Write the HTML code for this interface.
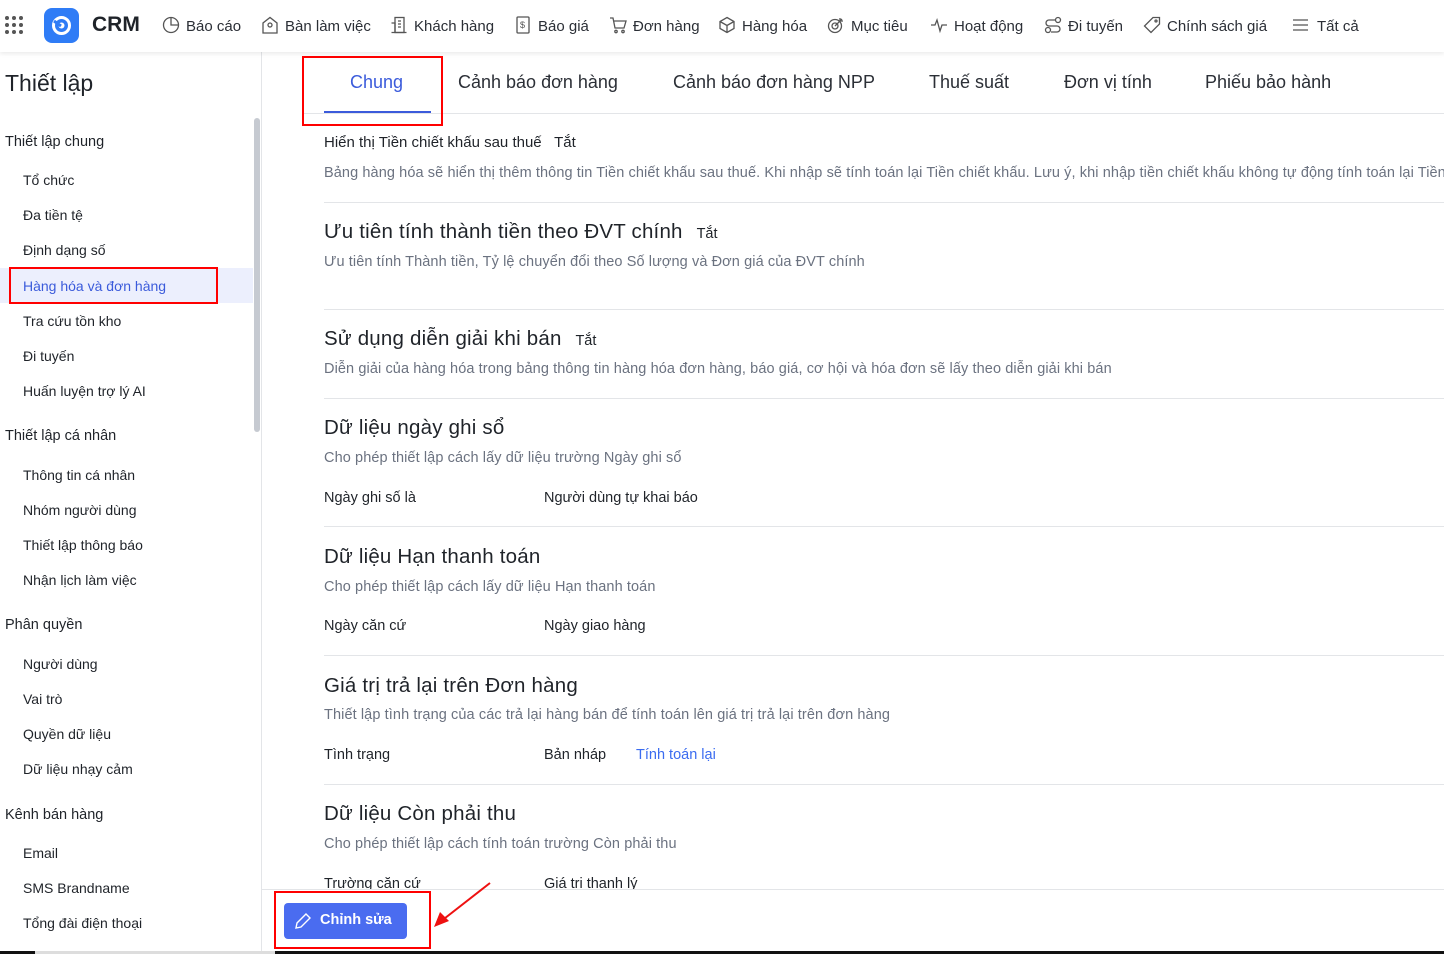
<!DOCTYPE html>
<html><head><meta charset="utf-8"><style>
*{margin:0;padding:0;box-sizing:border-box}
body{width:1444px;height:954px;overflow:hidden;background:#fff;font-family:"Liberation Sans",sans-serif;color:#1f2329;position:relative}
.a{position:absolute;white-space:nowrap}
.top{position:absolute;left:0;top:0;width:1444px;height:52px;background:#fff;box-shadow:0 2px 4px rgba(0,0,0,.08);z-index:2}
.nav{font-size:15px;color:#2b2f36;top:16px}
.nav svg{vertical-align:-3px;margin-right:6px}
.side{font-size:14px;color:#1f2329}
.grp{font-size:14.5px;color:#1f2329}
.h{font-size:20.5px;color:#1f2329;letter-spacing:.2px}
.d{font-size:14.5px;color:#6b7280;letter-spacing:.1px}
.sep{position:absolute;left:324px;right:0;height:1px;background:#e3e5e8}
.lab{font-size:14.5px;color:#1f2329}
.tab{font-size:18px;color:#2b2f36;top:72px}
</style></head><body>
<div class="top">
<svg class="a" style="left:4px;top:15px" width="20" height="20"><g fill="#555">
<circle cx="3" cy="3" r="2"/><circle cx="10" cy="3" r="2"/><circle cx="17" cy="3" r="2"/>
<circle cx="3" cy="10" r="2"/><circle cx="10" cy="10" r="2"/><circle cx="17" cy="10" r="2"/>
<circle cx="3" cy="17" r="2"/><circle cx="10" cy="17" r="2"/><circle cx="17" cy="17" r="2"/></g></svg>
<div class="a" style="left:44px;top:8px;width:35px;height:35px;border-radius:8px;background:#2f7cf6"></div>
<svg class="a" style="left:49px;top:13px" width="25" height="25"><circle cx="12.5" cy="12.5" r="8" fill="none" stroke="#fff" stroke-width="3"/><circle cx="12.5" cy="12.5" r="3" fill="#fff"/><path d="M5 8 L12 13" stroke="#2f7cf6" stroke-width="3"/></svg>
<div class="a" style="left:92px;top:13px;font-size:21px;font-weight:bold;color:#1f2329">CRM</div>
<div class="a nav" style="left:162px"><svg width="18" height="18" fill="none" stroke="#555" stroke-width="1.3"><circle cx="9" cy="9" r="7.5"/><path d="M9 1.5V9H16.5"/></svg>Báo cáo</div>
<div class="a nav" style="left:261px"><svg width="18" height="18" fill="none" stroke="#555" stroke-width="1.3"><path d="M2 17V7L9 1.5 16 7v10z"/><circle cx="9" cy="9" r="2"/></svg>Bàn làm việc</div>
<div class="a nav" style="left:390px"><svg width="18" height="18" fill="none" stroke="#555" stroke-width="1.3"><rect x="5" y="1.5" width="9" height="15"/><path d="M1.5 16.5h15M1.5 7h3.5v9.5"/><path d="M8 5h3M8 8h3M8 11h3"/></svg>Khách hàng</div>
<div class="a nav" style="left:514px"><svg width="18" height="18" fill="none" stroke="#555" stroke-width="1.3"><rect x="3" y="1" width="12" height="16" rx="1"/><text x="6" y="12" font-size="9" fill="#555" stroke="none">$</text></svg>Báo giá</div>
<div class="a nav" style="left:609px"><svg width="18" height="18" fill="none" stroke="#555" stroke-width="1.3"><path d="M1 2h3l2 10h9l2-7H5"/><circle cx="7" cy="15.5" r="1.2"/><circle cx="14" cy="15.5" r="1.2"/></svg>Đơn hàng</div>
<div class="a nav" style="left:718px"><svg width="18" height="18" fill="none" stroke="#555" stroke-width="1.3"><path d="M9 1.5l7 4v7l-7 4-7-4v-7z M2 5.5l7 4 7-4 M9 9.5v7"/></svg>Hàng hóa</div>
<div class="a nav" style="left:827px"><svg width="18" height="18" fill="none" stroke="#555" stroke-width="1.3"><circle cx="8" cy="10" r="6.5"/><circle cx="8" cy="10" r="3"/><path d="M8 10l7-7M13 2v3h3"/></svg>Mục tiêu</div>
<div class="a nav" style="left:930px"><svg width="18" height="18" fill="none" stroke="#555" stroke-width="1.3"><path d="M1 9h4l2-5 3 11 2-6h5"/></svg>Hoạt động</div>
<div class="a nav" style="left:1044px"><svg width="18" height="18" fill="none" stroke="#555" stroke-width="1.3"><circle cx="14" cy="4" r="2.5"/><circle cx="4" cy="14" r="2.5"/><path d="M11 4H5a3 3 0 000 6h8a3 3 0 010 6H7"/></svg>Đi tuyến</div>
<div class="a nav" style="left:1143px"><svg width="18" height="18" fill="none" stroke="#555" stroke-width="1.3"><path d="M10 1.5h6.5V8l-8.5 8.5-6.5-6.5z"/><circle cx="13" cy="5" r="1"/></svg>Chính sách giá</div>
<div class="a nav" style="left:1291px"><svg width="20" height="18" fill="none" stroke="#555" stroke-width="1.3"><path d="M2 4h15M2 9h15M2 14h15"/></svg>Tất cả</div>
</div>

<div class="a" style="left:261px;top:52px;width:1px;height:902px;background:#e3e5e8"></div>
<div class="a" style="left:254px;top:118px;width:6px;height:314px;border-radius:3px;background:#c6cad1"></div>
<div class="a" style="left:5px;top:70px;font-size:23px;color:#1f2329">Thiết lập</div>
<div class="a grp" style="left:5px;top:134px">Thiết lập chung</div>
<div class="a side" style="left:23px;top:172px">Tổ chức</div>
<div class="a side" style="left:23px;top:207px">Đa tiền tệ</div>
<div class="a side" style="left:23px;top:242px">Định dạng số</div>
<div class="a" style="left:0;top:268px;width:253px;height:35px;background:#eceffd"></div>
<div class="a side" style="left:23px;top:278px;color:#3b5bdb">Hàng hóa và đơn hàng</div>
<div class="a" style="left:9px;top:267px;width:209px;height:37px;border:2px solid #f00"></div>
<div class="a side" style="left:23px;top:313px">Tra cứu tồn kho</div>
<div class="a side" style="left:23px;top:348px">Đi tuyến</div>
<div class="a side" style="left:23px;top:383px">Huấn luyện trợ lý AI</div>
<div class="a grp" style="left:5px;top:428px">Thiết lập cá nhân</div>
<div class="a side" style="left:23px;top:467px">Thông tin cá nhân</div>
<div class="a side" style="left:23px;top:502px">Nhóm người dùng</div>
<div class="a side" style="left:23px;top:537px">Thiết lập thông báo</div>
<div class="a side" style="left:23px;top:572px">Nhận lịch làm việc</div>
<div class="a grp" style="left:5px;top:617px">Phân quyền</div>
<div class="a side" style="left:23px;top:656px">Người dùng</div>
<div class="a side" style="left:23px;top:691px">Vai trò</div>
<div class="a side" style="left:23px;top:726px">Quyền dữ liệu</div>
<div class="a side" style="left:23px;top:761px">Dữ liệu nhạy cảm</div>
<div class="a grp" style="left:5px;top:807px">Kênh bán hàng</div>
<div class="a side" style="left:23px;top:845px">Email</div>
<div class="a side" style="left:23px;top:880px">SMS Brandname</div>
<div class="a side" style="left:23px;top:915px">Tổng đài điện thoại</div>

<div class="a" style="left:304px;top:113px;width:1140px;height:1px;background:#e3e5e8"></div>
<div class="a tab" style="left:350px;color:#3b5bdb">Chung</div>
<div class="a" style="left:324px;top:111px;width:107px;height:2px;background:#3b5bdb"></div>
<div class="a" style="left:302px;top:56px;width:141px;height:70px;border:2px solid #f00"></div>
<div class="a tab" style="left:458px">Cảnh báo đơn hàng</div>
<div class="a tab" style="left:673px">Cảnh báo đơn hàng NPP</div>
<div class="a tab" style="left:929px">Thuế suất</div>
<div class="a tab" style="left:1064px">Đơn vị tính</div>
<div class="a tab" style="left:1205px">Phiếu bảo hành</div>

<div class="a lab" style="left:324px;top:134px;font-size:15px">Hiển thị Tiền chiết khấu sau thuế &nbsp;&nbsp;Tắt</div>
<div class="a d" style="left:324px;top:165px">Bảng hàng hóa sẽ hiển thị thêm thông tin Tiền chiết khấu sau thuế. Khi nhập sẽ tính toán lại Tiền chiết khấu. Lưu ý, khi nhập tiền chiết khấu không tự động tính toán lại Tiền</div>
<div class="sep" style="top:202px"></div>
<div class="a h" style="left:324px;top:220px">Ưu tiên tính thành tiền theo ĐVT chính <span style="font-size:14.5px;margin-left:8px;letter-spacing:0">Tắt</span></div>
<div class="a d" style="left:324px;top:254px">Ưu tiên tính Thành tiền, Tỷ lệ chuyển đổi theo Số lượng và Đơn giá của ĐVT chính</div>
<div class="sep" style="top:309px"></div>
<div class="a h" style="left:324px;top:327px">Sử dụng diễn giải khi bán <span style="font-size:14.5px;margin-left:8px;letter-spacing:0">Tắt</span></div>
<div class="a d" style="left:324px;top:361px">Diễn giải của hàng hóa trong bảng thông tin hàng hóa đơn hàng, báo giá, cơ hội và hóa đơn sẽ lấy theo diễn giải khi bán</div>
<div class="sep" style="top:398px"></div>
<div class="a h" style="left:324px;top:416px">Dữ liệu ngày ghi sổ</div>
<div class="a d" style="left:324px;top:450px">Cho phép thiết lập cách lấy dữ liệu trường Ngày ghi sổ</div>
<div class="a lab" style="left:324px;top:490px">Ngày ghi số là</div>
<div class="a lab" style="left:544px;top:490px">Người dùng tự khai báo</div>
<div class="sep" style="top:526px"></div>
<div class="a h" style="left:324px;top:545px">Dữ liệu Hạn thanh toán</div>
<div class="a d" style="left:324px;top:579px">Cho phép thiết lập cách lấy dữ liệu Hạn thanh toán</div>
<div class="a lab" style="left:324px;top:618px">Ngày căn cứ</div>
<div class="a lab" style="left:544px;top:618px">Ngày giao hàng</div>
<div class="sep" style="top:655px"></div>
<div class="a h" style="left:324px;top:674px">Giá trị trả lại trên Đơn hàng</div>
<div class="a d" style="left:324px;top:707px">Thiết lập tình trạng của các trả lại hàng bán để tính toán lên giá trị trả lại trên đơn hàng</div>
<div class="a lab" style="left:324px;top:747px">Tình trạng</div>
<div class="a lab" style="left:544px;top:747px">Bản nháp</div>
<div class="a lab" style="left:636px;top:747px;color:#3b6cf0">Tính toán lại</div>
<div class="sep" style="top:784px"></div>
<div class="a h" style="left:324px;top:802px">Dữ liệu Còn phải thu</div>
<div class="a d" style="left:324px;top:836px">Cho phép thiết lập cách tính toán trường Còn phải thu</div>
<div class="a lab" style="left:324px;top:876px">Trường căn cứ</div>
<div class="a lab" style="left:544px;top:876px">Giá trị thanh lý</div>

<div class="a" style="left:262px;top:889px;width:1182px;height:62px;background:#fff;border-top:1px solid #e3e5e8"></div>
<div class="a" style="left:284px;top:903px;width:123px;height:36px;border-radius:4px;background:#4a6cf0"></div>
<svg class="a" style="left:294px;top:912px" width="18" height="18" fill="none" stroke="#fff" stroke-width="1.4"><path d="M12 2l4 4-9 9-5 1 1-5z"/></svg>
<div class="a" style="left:320px;top:912px;font-size:14.5px;font-weight:bold;color:#fff">Chỉnh sửa</div>
<div class="a" style="left:274px;top:891px;width:157px;height:58px;border:2px solid #f00"></div>
<svg class="a" style="left:430px;top:880px" width="64" height="60"><path d="M60 3L10 42" stroke="#e11" stroke-width="2"/><path d="M4 47l6-15 9 9z" fill="#e11"/></svg>
<div class="a" style="left:0;top:951px;width:1444px;height:3px;background:#111"></div>
<div class="a" style="left:35px;top:951px;width:240px;height:3px;background:#ddd"></div>
</body></html>
